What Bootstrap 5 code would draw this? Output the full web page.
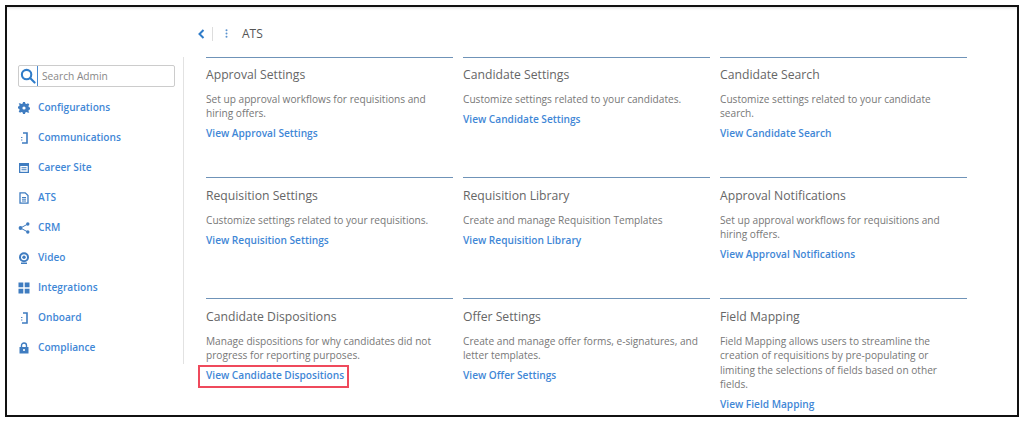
<!DOCTYPE html>
<html lang="en">

<head>
  <meta charset="UTF-8" />
  <meta name="viewport" content="width=device-width, initial-scale=1" />
  <title>ATS Admin</title>
  <link href="https://cdn.jsdelivr.net/npm/bootstrap@5.3.0/dist/css/bootstrap.min.css" rel="stylesheet" />
  <style>
    html, body { height: 421px; overflow: hidden; }
    body { font-family: "Open Sans", "Liberation Sans", sans-serif; background: #fff; color: #666; }
    .shot-frame { margin: 5px 0 0 5px; width: 1014px; height: 412px; border: 2px solid #111; overflow: hidden; box-shadow: inset 0 3px 3px -2px #ddd; }
    .side-col { width: 177px; height: 307px; margin-top: 50px; border-right: 1px solid #e2e2e2; flex: none; padding: 8px 8px 0 11px; }
    .search-box { height: 22px; border: 1px solid #ccc; border-radius: 2px; padding-left: 1px; margin-bottom: 6px; }
    .search-box svg { margin-right: 1px; flex: none; }
    .search-txt { border-left: 1px solid #4a8ad0; height: 20px; line-height: 20px; padding-left: 4px; font-size: 10.2px; color: #888; flex: 1; }
    .side-item { height: 30px; font-size: 10.15px; font-weight: 600; color: #3f87d6; text-decoration: none; }
    .side-item svg { width: 12px; height: 12px; margin-right: 8px; flex: none; }
    .main-col { padding: 0 0 0 22px; }
    .top-bar { height: 50px; padding: 3px 0 0 0; margin-left: -8px; }
    .top-bar .ats-name { font-size: 12px; color: #555; margin-left: 14px; }
    .sep-line { width: 1px; height: 14px; background: #ddd; margin: 0 12px 0 7px; }
    .tile-grid { display: grid; grid-template-columns: repeat(3, 247px); grid-template-rows: 120px 121px 120px; column-gap: 10px; }
    .tile { border-top: 1px solid #6f93b8; padding-top: 8px; }
    .tile:nth-child(n+4) { padding-top: 9px; }
    .tile h2 { font-size: 12.2px; font-weight: 400; color: #666; line-height: 18px; margin: 0 0 8px; }
    .tile p { font-size: 10.15px; line-height: 14.3px; margin: 0 0 5.7px; color: #777; padding-right: 5px; }
    .tile a { font-size: 10.15px; font-weight: 600; line-height: 14.3px; color: #3f87d6; text-decoration: none; display: block; width: fit-content; }
    .tile a.boxed { position: relative; }
    .tile a.boxed::after { content: ""; position: absolute; left: -8px; right: -5px; top: -3px; bottom: -5px; border: 2px solid #ef4a5c; }
  </style>
</head>

<body>

  <div class="shot-frame d-flex">

    <!-- Sidebar -->
    <div class="side-col">
      <div class="search-box d-flex align-items-center">
        <svg width="16" height="16" viewBox="0 0 17 17" fill="none" stroke="#2f7cc9" stroke-width="2.2"><circle cx="7" cy="7" r="5"/><path d="M11 11l4.5 4.5" stroke-linecap="round"/></svg>
        <div class="search-txt">Search Admin</div>
      </div>
      <a class="side-item d-flex align-items-center" href="#">
        <svg viewBox="0 0 12 12" fill="#3f7cc0"><path d="M5 0h2l.3 1.6 1.3.5L10 1.2l1.3 1.4-.9 1.3.5 1.3 1.6.3v2l-1.6.3-.5 1.3.9 1.3L10 10.8l-1.4-.9-1.3.5L7 12H5l-.3-1.6-1.3-.5-1.4.9L.7 9.4l.9-1.3-.5-1.3L-.5 6.5v-2l1.6-.3.5-1.3-.9-1.3L2 1.2l1.4.9 1.3-.5z"/><circle cx="6" cy="6" r="1.6" fill="#fff"/></svg>
        Configurations</a>
      <a class="side-item d-flex align-items-center" href="#">
        <svg viewBox="0 0 12 12" fill="none" stroke="#3f7cc0" stroke-width="1.6"><path d="M5 1h4v10H4"/><path d="M3 5.5h2M3 8h2" stroke-width=".9" stroke-dasharray="1 .6"/></svg>
        Communications</a>
      <a class="side-item d-flex align-items-center" href="#">
        <svg viewBox="0 0 12 12" fill="#3f7cc0"><path d="M1 1h10v10H1z"/><path d="M2.3 4h7.4v5.8H2.3z" fill="#fff"/><path d="M3.5 5.2h5v1h-5zM3.5 7.2h5v1h-5z"/></svg>
        Career Site</a>
      <a class="side-item d-flex align-items-center" href="#">
        <svg viewBox="0 0 12 12" fill="none" stroke="#3f7cc0" stroke-width="1.3"><path d="M2 .8h5.2L10 3.6v7.6H2z"/><path d="M4 5.5h4M4 7.2h4M4 9h4" stroke-width="1"/></svg>
        ATS</a>
      <a class="side-item d-flex align-items-center" href="#">
        <svg viewBox="0 0 12 12" fill="#3f7cc0"><circle cx="2.5" cy="6" r="1.9"/><circle cx="9.8" cy="2" r="1.7"/><circle cx="9.8" cy="10" r="1.7"/><path d="M2.5 6l7.3-4M2.5 6l7.3 4" stroke="#3f7cc0" stroke-width="1"/></svg>
        CRM</a>
      <a class="side-item d-flex align-items-center" href="#">
        <svg viewBox="0 0 12 12" fill="#3f7cc0"><circle cx="6" cy="5.2" r="5"/><circle cx="6" cy="5.2" r="3" fill="#fff"/><circle cx="6" cy="5.2" r="1.7"/><path d="M3 10.5h6V12H3z"/></svg>
        Video</a>
      <a class="side-item d-flex align-items-center" href="#">
        <svg viewBox="0 0 12 12" fill="#3f7cc0"><path d="M.5.5h4.8v4.8H.5zM6.7.5h4.8v4.8H6.7zM.5 6.7h4.8v4.8H.5zM6.7 6.7h4.8v4.8H6.7z"/></svg>
        Integrations</a>
      <a class="side-item d-flex align-items-center" href="#">
        <svg viewBox="0 0 12 12" fill="none" stroke="#3f7cc0" stroke-width="1.6"><path d="M5 1h4v10H4"/><path d="M3 5.5h2M3 8h2" stroke-width=".9" stroke-dasharray="1 .6"/></svg>
        Onboard</a>
      <a class="side-item d-flex align-items-center" href="#">
        <svg viewBox="0 0 12 12" fill="#3f7cc0"><path d="M1.5 5h9v6.5h-9z"/><path d="M3.5 5V3.5a2.5 2.5 0 0 1 5 0V5" fill="none" stroke="#3f7cc0" stroke-width="1.4"/><circle cx="6" cy="8" r="1.1" fill="#fff"/></svg>
        Compliance</a>
    </div>

    <!-- Contenido -->
    <div class="main-col flex-grow-1">
      <div class="top-bar d-flex align-items-center">
        <svg width="7" height="10" viewBox="0 0 7 10" fill="none" stroke="#2f7cc9" stroke-width="2"><path d="M5.5 1L1.5 5l4 4"/></svg>
        <span class="sep-line"></span>
        <svg width="3" height="9" viewBox="0 0 3 9" fill="#5b93cf"><circle cx="1.5" cy="1.2" r="1"/><circle cx="1.5" cy="4.5" r="1"/><circle cx="1.5" cy="7.8" r="1"/></svg>
        <span class="ats-name">ATS</span>
      </div>
      <div class="tile-grid">
        <div class="tile">
          <h2>Approval Settings</h2>
          <p>Set up approval workflows for requisitions and hiring offers.</p>
          <a href="#">View Approval Settings</a>
        </div>
        <div class="tile">
          <h2>Candidate Settings</h2>
          <p>Customize settings related to your candidates.</p>
          <a href="#">View Candidate Settings</a>
        </div>
        <div class="tile">
          <h2>Candidate Search</h2>
          <p>Customize settings related to your candidate search.</p>
          <a href="#">View Candidate Search</a>
        </div>
        <div class="tile">
          <h2>Requisition Settings</h2>
          <p>Customize settings related to your requisitions.</p>
          <a href="#">View Requisition Settings</a>
        </div>
        <div class="tile">
          <h2>Requisition Library</h2>
          <p>Create and manage Requisition Templates</p>
          <a href="#">View Requisition Library</a>
        </div>
        <div class="tile">
          <h2>Approval Notifications</h2>
          <p>Set up approval workflows for requisitions and hiring offers.</p>
          <a href="#">View Approval Notifications</a>
        </div>
        <div class="tile">
          <h2>Candidate Dispositions</h2>
          <p>Manage dispositions for why candidates did not progress for reporting purposes.</p>
          <a class="boxed" href="#">View Candidate Dispositions</a>
        </div>
        <div class="tile">
          <h2>Offer Settings</h2>
          <p>Create and manage offer forms, e-signatures, and letter templates.</p>
          <a href="#">View Offer Settings</a>
        </div>
        <div class="tile">
          <h2>Field Mapping</h2>
          <p>Field Mapping allows users to streamline the creation of requisitions by pre-populating or limiting the selections of fields based on other fields.</p>
          <a href="#">View Field Mapping</a>
        </div>
      </div>
    </div>

  </div>

  <script src="https://cdn.jsdelivr.net/npm/bootstrap@5.3.0/dist/js/bootstrap.bundle.min.js"></script>
</body>

</html>
